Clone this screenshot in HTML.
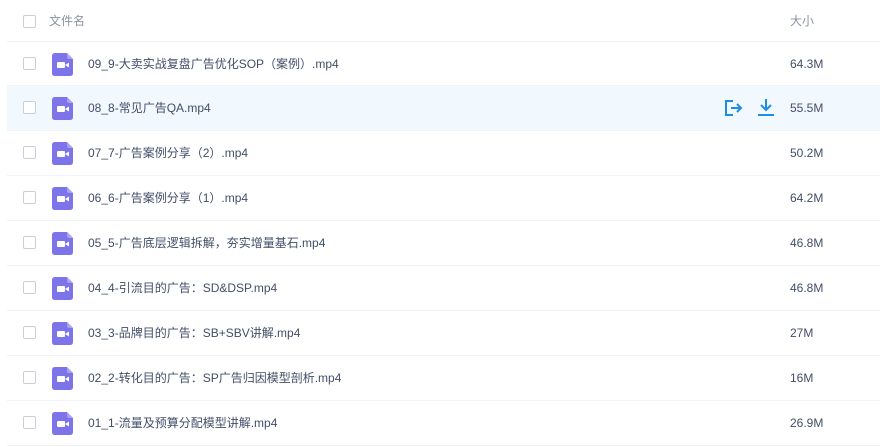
<!DOCTYPE html><html><head><meta charset="utf-8"><style>
body{margin:0;width:880px;height:447px;background:#fff;font-family:"Liberation Sans","Noto Sans CJK SC",sans-serif;font-size:12px;color:#424e67;overflow:hidden;position:relative}
.row{position:absolute;left:7px;right:0;height:45px;border-bottom:1px solid #f0f3f7;box-sizing:border-box}
.cb{position:absolute;left:16px;top:50%;margin-top:-7px;width:13px;height:13px;border:1px solid #c9ced8;border-radius:2px;box-sizing:border-box;background:#fff}
.ic{position:absolute;left:45px;top:11px}
.nm{position:absolute;left:81px;top:0;line-height:44px}
.sz{position:absolute;left:783px;top:0;line-height:44px}
.hl{background:#f1f8fe}
</style></head><body>
<div class="row" style="top:0;height:42px;color:#8c92a0"><div class="cb" style="margin-top:-6px"></div><div class="nm" style="left:42px;line-height:42px">文件名</div><div class="sz" style="line-height:42px">大小</div></div>
<div id="r"></div>
<script>
var d=[["09_9-大卖实战复盘广告优化SOP（案例）.mp4","64.3M"],["08_8-常见广告QA.mp4","55.5M"],["07_7-广告案例分享（2）.mp4","50.2M"],["06_6-广告案例分享（1）.mp4","64.2M"],["05_5-广告底层逻辑拆解，夯实增量基石.mp4","46.8M"],["04_4-引流目的广告：SD&DSP.mp4","46.8M"],["03_3-品牌目的广告：SB+SBV讲解.mp4","27M"],["02_2-转化目的广告：SP广告归因模型剖析.mp4","16M"],["01_1-流量及预算分配模型讲解.mp4","26.9M"]];
var ic='<svg class="ic" width="22" height="23" viewBox="0 0 22 23"><path d="M3 0H15L21 6V20Q21 23 18 23H3Q0 23 0 20V3Q0 0 3 0Z" fill="#7e74ea"/><path d="M15 0L21 6H17Q15 6 15 4Z" fill="#a9a2f3"/><rect x="5" y="9" width="8" height="6" rx="1" fill="#fff"/><path d="M13 12L17 9.5V14.5Z" fill="#fff"/></svg>';
var h='';d.forEach(function(x,i){var t=41+i*45;h+='<div class="row'+(i==1?' hl':'')+'" style="top:'+t+'px;border-top:'+(i==0?'1px solid #f0f3f7':'none')+'"><div class="cb"></div>'+ic+'<div class="nm">'+x[0].replace(/&/g,'&amp;')+'</div>'+(i==1?'<svg style="position:absolute;left:717px;top:13px" width="20" height="18" viewBox="0 0 20 18" fill="none" stroke="#1a8fe3" stroke-width="2"><path d="M9 2H2V16H9"/><path d="M7 9H17M13 5L17 9L13 13"/></svg><svg style="position:absolute;left:750px;top:12px" width="18" height="19" viewBox="0 0 18 19" fill="none" stroke="#1a8fe3" stroke-width="2"><path d="M9 1V12M4 7L9 12L14 7M1 17H17"/></svg>':'')+'<div class="sz">'+x[1]+'</div></div>'});
document.getElementById('r').innerHTML=h;
</script>
</body></html>
